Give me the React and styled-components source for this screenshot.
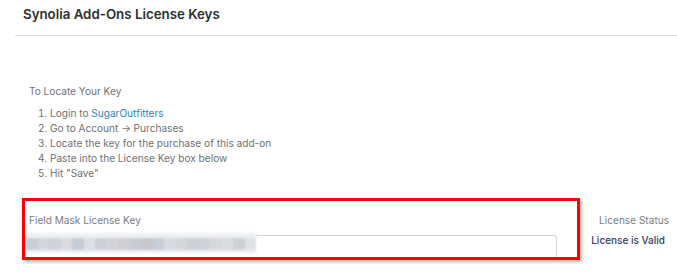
import React from 'react';
import styled, { createGlobalStyle } from 'styled-components';

const GlobalStyle = createGlobalStyle`
    body {
        margin: 0;
        background: #ffffff;
        font-family: Inter, "Noto Sans", sans-serif;
    }
    * {
        box-sizing: border-box;
    }
`

const blurBlocks = [
    '#c9ced6', '#d3d6dc', '#cfd3d9', '#d9dbe0', '#c5ccd6', '#dcdfe3', '#cdd1d7', '#d2d4d9',
    '#cfcfd2', '#c7ccd3', '#c8c8cc', '#c6ced8', '#d8dbe0', '#d5d6d9', '#ccd1d8', '#cfd3d8',
    '#d6d8dc', '#dadde1', '#cdd0d5', '#dfe1e4',
]

export default function App() {
    return (
        <Page>
            <GlobalStyle />
            <Header>
                <Title>Synolia Add-Ons License Keys</Title>
            </Header>
            <Content>
                <Instructions>
                    <Intro>To Locate Your Key</Intro>
                    <Steps>
                        <li>Login to <Link href="#">SugarOutfitters</Link></li>
                        <li>Go to Account → Purchases</li>
                        <li>Locate the key for the purchase of this add-on</li>
                        <li>Paste into the License Key box below</li>
                        <li>Hit "Save"</li>
                    </Steps>
                </Instructions>
                <FieldRow>
                    <KeyField>
                        <FieldLabel>Field Mask License Key</FieldLabel>
                        <KeyInput>
                            <Blurred>
                                {blurBlocks.map((c, i) => (
                                    <BlurCell key={i} color={c} />
                                ))}
                            </Blurred>
                        </KeyInput>
                        <Highlight />
                    </KeyField>
                    <StatusColumn>
                        <StatusLabel>License Status</StatusLabel>
                        <StatusValue>License is Valid</StatusValue>
                    </StatusColumn>
                </FieldRow>
            </Content>
        </Page>
    )
}

const Page = styled.div`
    width: 677px;
    height: 279px;
    overflow: hidden;
    padding-left: 15px;
`

const Header = styled.div`
    height: 36px;
    border-bottom: 1px solid #dde1e6;
    padding: 6px 0 0 8px;
`

const Title = styled.h1`
    margin: 0;
    font-size: 13.3px;
    font-weight: 600;
    color: #2d2f33;
    letter-spacing: 0;
`

const Content = styled.div`
    padding: 48px 0 0 0;
`

const Instructions = styled.div`
    padding-left: 14px;
    font-size: 10.1px;
    color: #6f7175;
`

const Intro = styled.div`
    line-height: 14px;
    margin-bottom: 8px;
`

const Steps = styled.ol`
    margin: 0;
    padding-left: 21px;
    li {
        line-height: 15px;
        padding-left: 0;
    }
`

const Link = styled.a`
    color: #2a86c7;
    text-decoration: none;
`

const FieldRow = styled.div`
    display: flex;
    justify-content: space-between;
    margin-top: 17px;
`

const KeyField = styled.div`
    position: relative;
    width: 542px;
    padding-top: 15px;
`

const FieldLabel = styled.div`
    font-size: 10.1px;
    color: #7a7d83;
    padding-left: 14px;
    line-height: 14px;
    margin-bottom: 8px;
`

const KeyInput = styled.div`
    height: 25px;
    margin-left: 10px;
    border: 1px solid #cdd3dc;
    border-radius: 3px;
    background: #ffffff;
    padding: 0;
    display: flex;
    align-items: flex-start;
`

const Blurred = styled.div`
    display: grid;
    grid-template-columns: repeat(20, 11.5px);
    width: 230px;
    height: 20px;
    margin-top: -3px;
    filter: blur(1.2px);
    background: #eef0f3;
`

const BlurCell = styled.div`
    background: ${props => props.color};
    height: 12px;
    margin-top: 5px;
`

const Highlight = styled.div`
    position: absolute;
    left: 7px;
    top: 0;
    width: 558px;
    height: 62px;
    border: 3px solid #ff0000;
    box-shadow: 2px 2px 3px rgba(0, 0, 0, 0.3);
    pointer-events: none;
`

const StatusColumn = styled.div`
    display: flex;
    flex-direction: column;
    align-items: flex-end;
    padding-top: 15px;
    padding-right: 8px;
`

const StatusLabel = styled.div`
    font-size: 10.1px;
    color: #7a7d83;
    line-height: 14px;
    margin-bottom: 6px;
`

const StatusValue = styled.div`
    font-size: 10px;
    color: #34405c;
    font-weight: 500;
    line-height: 14px;
    padding-right: 4px;
`
